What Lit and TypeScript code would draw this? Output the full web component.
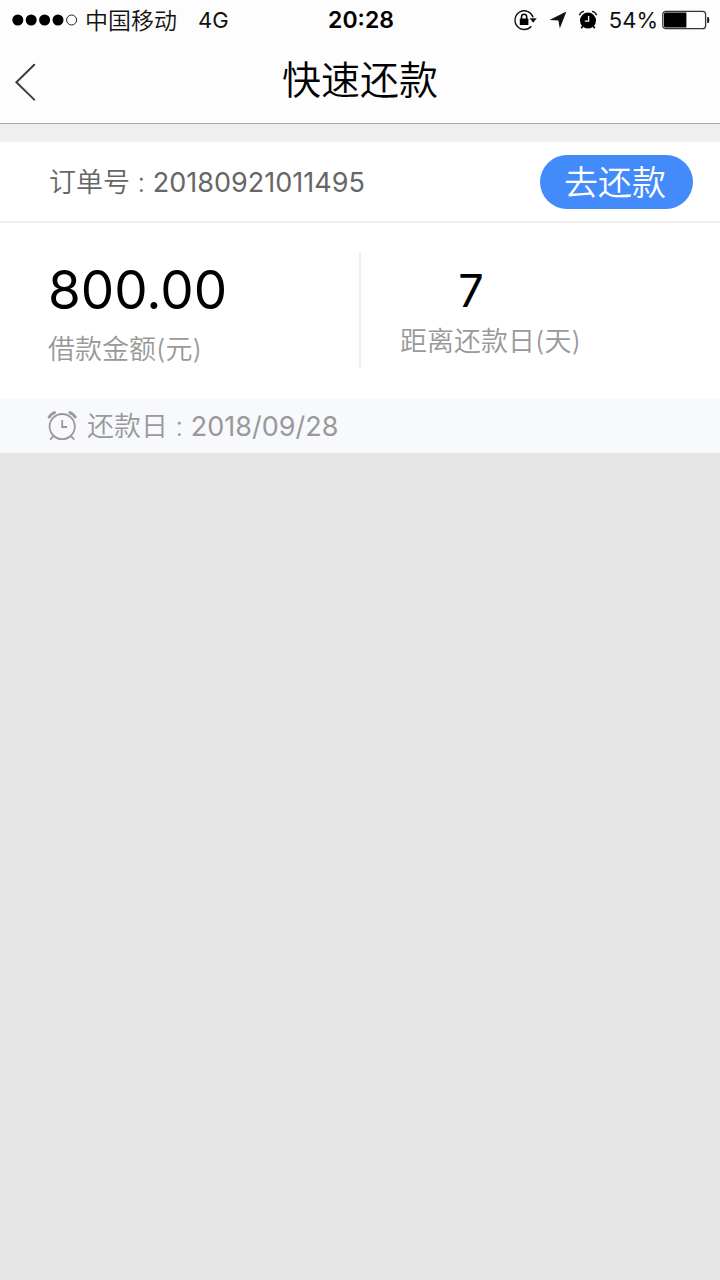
import { LitElement, html, css, svg } from "lit";
import { customElement, property } from "lit/decorators.js";

const lockIcon = svg`<svg class="icon" width="24" height="22" viewBox="0 0 24 22" fill="none" aria-hidden="true">
  <path d="M20.2 8.4A9.3 9.3 0 1 0 18.4 17.2" stroke="#111" stroke-width="1.4"/>
  <path d="M16.6 9.3h7.2l-3.6 4.4z" fill="#111"/>
  <rect x="6.8" y="9.6" width="8.6" height="6.4" rx=".6" fill="#000"/>
  <path d="M8.5 10V7.8a2.6 2.6 0 0 1 5.2 0V10" stroke="#000" stroke-width="1.5"/>
</svg>`;

const arrowIcon = svg`<svg class="icon" width="18" height="18" viewBox="0 0 18 18" aria-hidden="true">
  <path d="M17.4.6 10.8 17.6 9.4 9.6.4 9z" fill="#111"/>
</svg>`;

const alarmIcon = svg`<svg class="icon" width="20" height="20" viewBox="0 0 20 20" fill="none" aria-hidden="true">
  <circle cx="10" cy="10.6" r="8" fill="#000"/>
  <path d="M1.4 5.2Q2.4 2 6 1.4M18.6 5.2Q17.6 2 14 1.4" stroke="#111" stroke-width="1.4"/>
  <path d="m4.8 16-1.6 2.2M15.2 16l1.6 2.2" stroke="#000" stroke-width="1.6"/>
  <path d="M10.6 6v5.2H6.8" stroke="#fff" stroke-width="1.3"/>
</svg>`;

const batteryIcon = svg`<svg class="icon" width="48" height="20" viewBox="0 0 48 20" fill="none" aria-hidden="true">
  <rect x=".8" y="1.3" width="42.8" height="17.4" rx="3" stroke="#333" stroke-width="1.3"/>
  <path d="M3.6 2.6H24.4V17.4H3.6a1.6 1.6 0 0 1-1.6-1.6V4.2a1.6 1.6 0 0 1 1.6-1.6z" fill="#000"/>
  <path d="M45.2 7h.4a1.6 1.6 0 0 1 1.6 1.6v2.8a1.6 1.6 0 0 1-1.6 1.6h-.4z" fill="#111"/>
</svg>`;

const clockIcon = svg`<svg class="icon" width="30" height="30" viewBox="0 0 30 30" fill="none" stroke="#999" stroke-linecap="round" aria-hidden="true">
  <circle cx="15.2" cy="15.6" r="12.6" stroke-width="1.8"/>
  <path d="M15.2 9v7h4.8" stroke-width="1.8" stroke-linecap="butt"/>
  <path d="M2.2 6Q4 3 7.4 1.6M28.2 6Q26.4 3 23 1.6" stroke-width="3"/>
  <path d="m6.2 25.4-2.6 2.8M24.2 25.4l2.6 2.8" stroke-width="1.8"/>
</svg>`;

@customElement("status-bar")
export class StatusBar extends LitElement {
  static styles = css`
    :host {
      display: grid;
      grid-template-columns: 1fr auto 1fr;
      align-items: center;
      height: 40px;
      padding: 0 10px 0 12px;
      font-size: 22px;
      line-height: 40px;
      color: #111;
    }
    .left,
    .right {
      display: flex;
      align-items: center;
    }
    .right {
      justify-content: flex-end;
    }
    .icon {
      display: block;
      flex: none;
    }
    .carrier {
      margin: 0 21px 0 7px;
      padding-top: 2px;
      font-size: 23px;
      line-height: 38px;
    }
    .latin {
      font-weight: 400;
    }
    .time {
      font-size: 23px;
      font-weight: 600;
      color: #000;
    }
    .lock {
      margin-right: 12px;
    }
    .arrow {
      margin-right: 11px;
    }
    .alarm {
      margin-right: 11px;
    }
    .percent {
      margin-right: 4px;
    }
  `;

  render() {
    return html`
      <div class="left">
        <svg class="icon" width="66" height="12" viewBox="0 0 66 12" aria-hidden="true">
          ${[0, 1, 2, 3].map((i) => svg`<circle cx=${5.8 + i * 13.4} cy="6" r="5.5" fill="#000" />`)}
          <circle cx="59.6" cy="6" r="5" fill="none" stroke="#222" />
        </svg>
        <span class="carrier">中国移动</span>
        <span class="latin">4G</span>
      </div>
      <div class="time">20:28</div>
      <div class="right">
        <span class="lock">${lockIcon}</span>
        <span class="arrow">${arrowIcon}</span>
        <span class="alarm">${alarmIcon}</span>
        <span class="latin percent">54%</span>
        ${batteryIcon}
      </div>
    `;
  }
}

@customElement("loan-card")
export class LoanCard extends LitElement {
  @property() order = "";
  @property() amount = "";
  @property() days = "";
  @property() due = "";

  static styles = css`
    :host {
      display: block;
      background: #fff;
      font-size: 27px;
      line-height: 40px;
    }
    .label {
      padding-top: 2px;
    }
    .order {
      display: flex;
      align-items: center;
      justify-content: space-between;
      height: 79px;
      padding: 0 27px 0 49px;
      border-bottom: 2px solid #eee;
      color: #666;
    }
    .num {
      font-weight: 400;
    }
    .pay {
      height: 54px;
      padding: 2px 27px 0 24px;
      border: 0;
      border-radius: 27px;
      background: #438afa;
      color: #fff;
      font: inherit;
      font-size: 34px;
      line-height: 52px;
      cursor: pointer;
    }
    .body {
      display: grid;
      grid-template-columns: 1fr 1fr;
      padding: 29px 0 31px;
    }
    .cell {
      display: flex;
      flex-direction: column;
      align-items: flex-start;
      height: 116px;
      padding-left: 48px;
      color: #999;
    }
    .remaining {
      margin-left: -1px;
      padding-left: 39px;
      border-left: 2px solid #eee;
    }
    .group {
      display: flex;
      flex-direction: column;
      align-items: center;
    }
    .amount {
      font-size: 53px;
      font-weight: 400;
      line-height: 76px;
      color: #000;
    }
    .days {
      padding-right: 39px;
      font-size: 45px;
      font-weight: 400;
      line-height: 78px;
      height: 70px;
      color: #000;
    }
    .days + .label {
      padding-top: 0;
    }
    .due {
      display: flex;
      align-items: center;
      height: 54px;
      padding-left: 47px;
      gap: 10px;
      background: #f7f9fc;
      color: #999;
    }
    .icon {
      display: block;
      flex: none;
    }
  `;

  render() {
    return html`
      <div class="order">
        <span class="label">订单号 : <span class="num">${this.order}</span></span>
        <button class="pay" type="button">去还款</button>
      </div>
      <div class="body">
        <div class="cell">
          <span class="amount">${this.amount}</span>
          <span class="label">借款金额(元)</span>
        </div>
        <div class="cell remaining">
          <div class="group">
            <span class="days">${this.days}</span>
            <span class="label">距离还款日(天)</span>
          </div>
        </div>
      </div>
      <div class="due">
        ${clockIcon}
        <span class="label">还款日 : <span class="num">${this.due}</span></span>
      </div>
    `;
  }
}

@customElement("app-root")
export class AppRoot extends LitElement {
  static styles = css`
    :host {
      display: block;
      min-height: 100vh;
      background: #e5e5e5;
      font-family: Inter, "Noto Sans CJK SC", sans-serif;
      font-weight: 350;
    }
    .top {
      background: #fdfdfd;
      border-bottom: 1px solid #a8a8a8;
    }
    .nav {
      display: grid;
      grid-template-columns: 60px 1fr 60px;
      align-items: center;
      height: 83px;
    }
    .back {
      display: block;
      padding: 0 0 0 14px;
      border: 0;
      background: none;
      cursor: pointer;
    }
    .back svg {
      display: block;
    }
    .title {
      margin: 0;
      text-align: center;
      font-size: 39px;
      line-height: 80px;
      height: 83px;
      font-weight: inherit;
      color: #000;
    }
    .main {
      padding-top: 18px;
      background: #efefef;
    }
  `;

  render() {
    return html`
      <header class="top">
        <status-bar></status-bar>
        <div class="nav">
          <button class="back" type="button" aria-label="返回">
            <svg width="22" height="38" viewBox="0 0 22 38" fill="none" aria-hidden="true">
              <path d="M20.2 1.8 2.4 19.2 20.2 36.6" stroke="#3c3c41" stroke-width="2" stroke-linecap="round" />
            </svg>
          </button>
          <h1 class="title">快速还款</h1>
        </div>
      </header>
      <main class="main">
        <loan-card order="20180921011495" amount="800.00" days="7" due="2018/09/28"></loan-card>
      </main>
    `;
  }
}
